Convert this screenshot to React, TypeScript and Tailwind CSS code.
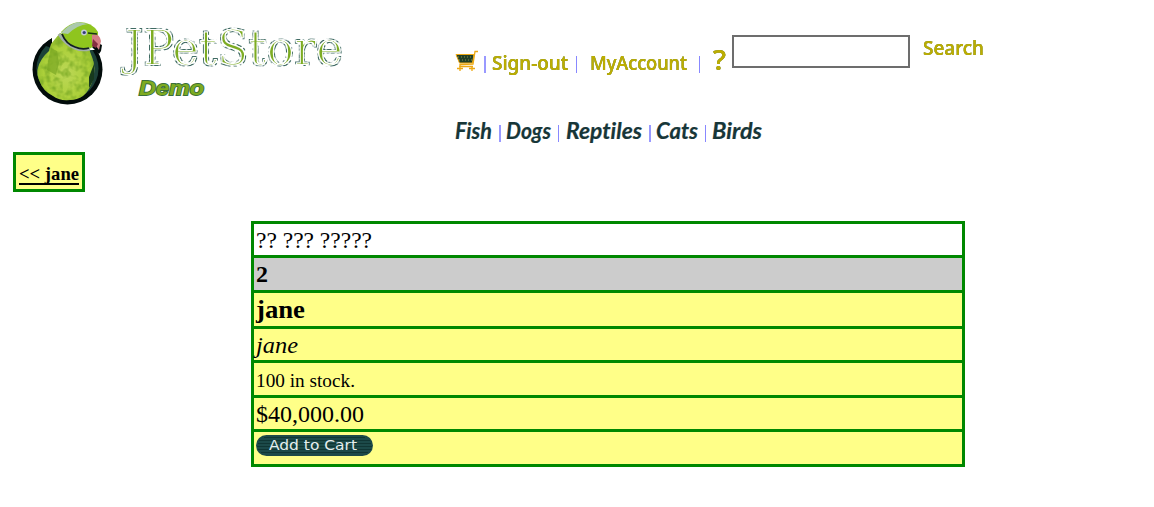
import React from "react";

function Parrot() {
  return (
    <svg width="76" height="88" viewBox="0 0 76 88" className="shrink-0">
      <defs>
        <radialGradient id="body" cx="50%" cy="60%" r="60%">
          <stop offset="0" stopColor="#bcd757" />
          <stop offset="0.65" stopColor="#acd03a" />
          <stop offset="1" stopColor="#8bb82b" />
        </radialGradient>
        <filter id="feather" x="0" y="0" width="100%" height="100%" colorInterpolationFilters="sRGB">
          <feTurbulence type="fractalNoise" baseFrequency="0.16" numOctaves="2" seed="4" />
          <feColorMatrix values="0 0 0 0 0.5  0 0 0 0 0.68  0 0 0 0 0.16  2.4 0 0 0 -1" />
          <feComposite in2="SourceGraphic" operator="in" />
        </filter>
      </defs>
      <ellipse cx="35.5" cy="48.5" rx="35" ry="35" fill="#020c0b" />
      <ellipse cx="35.5" cy="47.5" rx="31" ry="31" fill="#1d4239" />
      <path d="M28 0H64V29H20V12Z" fill="#fff" />
      <path d="M20 17L11 24L20 27ZM58 24L67 33L69 30L70 24L64 21Z" fill="#020c0b" />
      <path d="M28 12L19 23L17 30Q8 38 6 47Q4 53 8 61Q11 70 21 75Q27 80 38 79Q45 79 51 75Q58 69 61 58Q64 46 60 36L57 28L34 14Z" fill="url(#body)" />
      <path d="M28 12L19 23L17 30Q8 38 6 47Q4 53 8 61Q11 70 21 75Q27 80 38 79Q45 79 51 75Q58 69 61 58Q64 46 60 36L57 28L34 14Z" fill="#fff" filter="url(#feather)" />
      <path d="M19 27L16 40L15 49L24 54L27 42L25 30Z" fill="#75a321" opacity="0.65" />
      <path d="M57 56L62 43L62 58L57 67Z" fill="#17391d" />
      <path d="M29 11Q37 2 47 1Q60 1 66 11L66 20Q61 27 56 28Q43 28 35 20Z" fill="#8fc51e" />
      <path d="M29 12Q37 3 46 1L56 3Q45 4 36 13Z" fill="#abc9ac" />
      <path d="M27 13Q34 24 43 27Q50 30 58 28" fill="none" stroke="#a2afa8" strokeWidth="3" />
      <path d="M30 13Q34 23 43 26Q50 29 57 27" fill="none" stroke="#111d22" strokeWidth="1.8" />
      <path d="M60 14Q67 11 69 20L67 29L64 25L60 21Z" fill="#d57e85" />
      <path d="M61 18L60 25L64 27L66 23Z" fill="#852d42" />
      <path d="M56 12L65 13" stroke="#163712" strokeWidth="1.6" />
      <circle cx="52" cy="11.5" r="3" fill="#c3ccd1" />
      <circle cx="52.2" cy="11.5" r="1.6" fill="#343b7b" />
    </svg>
  );
}

function Logo() {
  return (
    <svg width="230" height="88" viewBox="0 0 230 88" className="ml-[10px] shrink-0 overflow-visible">
      <defs>
        <filter id="engraved" x="-5%" y="-5%" width="110%" height="115%" colorInterpolationFilters="sRGB">
          <feMorphology in="SourceAlpha" operator="dilate" radius="1" result="outer" />
          <feTurbulence type="fractalNoise" baseFrequency="0.3" numOctaves="1" seed="7" />
          <feColorMatrix values="0 0 0 0 0.25  0 0 0 0 0.42  0 0 0 0 0.39  5 0 0 0 -1.9" />
          <feComposite in2="outer" operator="in" result="rim" />
          <feFlood floodColor="#ffffff" />
          <feComposite in2="SourceAlpha" operator="in" result="face" />
          <feMorphology in="SourceAlpha" operator="erode" radius="1" result="inner" />
          <feFlood floodColor="#7dac24" />
          <feComposite in2="inner" operator="in" result="core" />
          <feMerge>
            <feMergeNode in="rim" />
            <feMergeNode in="face" />
            <feMergeNode in="face" />
            <feMergeNode in="core" />
          </feMerge>
        </filter>
      </defs>
      <text x="7" y="44" fontFamily="DejaVu Serif, serif" fontSize="48" textLength="218" lengthAdjust="spacingAndGlyphs" filter="url(#engraved)">JPetStore</text>
      <text x="21" y="74" fontFamily="Liberation Sans, sans-serif" fontSize="21" fontWeight="700" fontStyle="italic" textLength="65" lengthAdjust="spacingAndGlyphs" fill="#7eab20" stroke="#3b7038" strokeWidth="1.8" paintOrder="stroke">Demo</text>
    </svg>
  );
}

function Cart() {
  return (
    <svg width="24" height="22" viewBox="0 0 24 22" className="shrink-0">
      <path d="M1 4.5H19L17.5 13H4.5Z" fill="#203e28" stroke="#eda914" strokeWidth="1" />
      <path d="M3 7H18M4 10H17" stroke="#8b9544" strokeWidth="1" strokeDasharray="1 2" />
      <path d="M23 1.5H20L18 14L5 14.5L5 16.5H18" fill="none" stroke="#eda914" strokeWidth="1.3" />
      <path d="M2 18.5H8M14 18.5H20M5 16V21M17 16V21" stroke="#eda914" strokeWidth="1.3" />
    </svg>
  );
}

function MenuLabel({ text, width, size = 19 }: { text: string; width: number; size?: number }) {
  return (
    <svg width={width} height="26" className="shrink-0 overflow-visible drop-shadow-[0.7px_0.5px_0px_#4b6d3a]">
      <text x="0" y="20" fontFamily="Noto Sans, sans-serif" fontSize={size} fontWeight="500" textLength={width} lengthAdjust="spacingAndGlyphs" fill="#bdae00" stroke="#c9b400" strokeWidth="0.2">{text}</text>
    </svg>
  );
}

function Category({ text, width }: { text: string; width: number }) {
  return (
    <svg width={width} height="26" className="shrink-0 overflow-visible [font-variant-ligatures:none]">
      <text x="0" y="20" fontFamily="Lato, sans-serif" fontSize="22" fontWeight="700" fontStyle="italic" textLength={width} lengthAdjust="spacingAndGlyphs" fill="#173638" stroke="#173638" strokeWidth="0.2">{text}</text>
    </svg>
  );
}

const rows = [
  { text: "?? ??? ?????", cls: "h-[34px] bg-white text-[24px]", width: 116, base: 24 },
  { text: "2", cls: "h-[35px] bg-[#cccccc] text-[24px] font-bold", width: 12, base: 24 },
  { text: "jane", cls: "h-[36px] bg-[#ffff88] text-[26px] font-bold", width: 49, base: 25 },
  { text: "jane", cls: "h-[34px] bg-[#ffff88] text-[24px] italic", width: 42, base: 24 },
  { text: "100 in stock.", cls: "h-[35px] bg-[#ffff88] text-[19px]", width: 99, base: 24 },
  { text: "$40,000.00", cls: "h-[34px] bg-[#ffff88] text-[24px]", width: 108, base: 24 },
];

export default function App() {
  return (
    <main className="h-[507px] w-[1154px] overflow-hidden bg-white font-['Liberation_Serif',serif] text-black">
      <header className="flex h-[152px] pl-[32px] pt-[21px]">
        <div className="flex w-[423px] shrink-0">
          <Parrot />
          <Logo />
        </div>
        <div>
          <div className="flex h-[98px] items-start">
            <div className="flex pt-[29px]"><Cart /></div>
            <div className="ml-[5px] mt-[35px] h-[17px] w-[2px] bg-[#9999ff]" />
            <div className="ml-[6px] pt-[29px]"><MenuLabel text="Sign-out" width={76} /></div>
            <div className="ml-[8px] mt-[35px] h-[17px] w-px bg-[#8888ff]" />
            <div className="ml-[13px] pt-[29px]"><MenuLabel text="MyAccount" width={97} /></div>
            <div className="ml-[12px] mt-[35px] h-[17px] w-px bg-[#8888ff]" />
            <div className="ml-[13px] pt-[29px]"><MenuLabel text="?" width={13} size={27} /></div>
            <input aria-label="Search" className="ml-[6px] mt-[14px] h-[33px] w-[178px] border-2 border-[#6d6d6d] bg-white outline-none" />
            <button className="ml-[13px] mt-[14px]"><MenuLabel text="Search" width={61} /></button>
          </div>
          <nav className="flex items-start">
            <Category text="Fish" width={37} />
            <div className="ml-[7px] mt-[6px] h-[17px] w-[2px] bg-[#9999ff]" />
            <div className="ml-[5px]"><Category text="Dogs" width={45} /></div>
            <div className="ml-[7px] mt-[6px] h-[17px] w-px bg-[#8888ff]" />
            <div className="ml-[7px]"><Category text="Reptiles" width={76} /></div>
            <div className="ml-[7px] mt-[6px] h-[17px] w-[2px] bg-[#9999ff]" />
            <div className="ml-[5px]"><Category text="Cats" width={42} /></div>
            <div className="ml-[7px] mt-[6px] h-[17px] w-px bg-[#8888ff]" />
            <div className="ml-[6px]"><Category text="Birds" width={50} /></div>
          </nav>
        </div>
      </header>

      <div className="ml-[13px] h-[40px] w-[72px] border-[3px] border-[#008800] bg-[#ffff88] pl-[3px]">
        <svg width="62" height="34" className="block">
          <text x="0" y="25" fontSize="19" fontWeight="700" textLength="60" lengthAdjust="spacingAndGlyphs">{"<< jane"}</text>
          <path d="M0 29H60" stroke="#000" strokeWidth="2" />
        </svg>
      </div>

      <section className="ml-[251px] mt-[29px] w-[714px] border-[3px] border-[#008800]">
        {rows.map((r, i) => (
          <div key={i} className={`border-b-[3px] border-[#008800] pl-[2px] ${r.cls}`}>
            <svg width={r.width} height="31" className="block overflow-visible">
              <text x="0" y={r.base} textLength={r.width} lengthAdjust="spacingAndGlyphs">{r.text}</text>
            </svg>
          </div>
        ))}
        <div className="h-[32px] bg-[#ffff88] pl-[2px] pt-[3px]">
          <button className="block">
            <svg width="117" height="21" className="block">
              <rect width="117" height="21" rx="10.5" fill="#1c4a49" />
              <path d="M8 2.5H109M3 5.5H114M2 8.5H115M1 11.5H116M2 14.5H115M5 17.5H112" stroke="#103634" />
              <text x="13" y="15" fontFamily="DejaVu Sans, sans-serif" fontSize="14" textLength="88" lengthAdjust="spacingAndGlyphs" fill="#e5eeee">Add to Cart</text>
            </svg>
          </button>
        </div>
      </section>
    </main>
  );
}
